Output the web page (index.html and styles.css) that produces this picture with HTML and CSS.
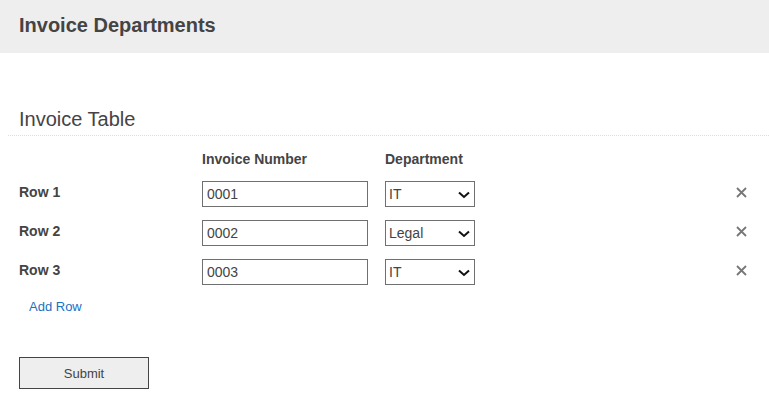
FILE: index.html
```html
<!DOCTYPE html>
<html lang="en">

<head>
    <meta charset="UTF-8">
    <meta name="viewport" content="width=device-width, initial-scale=1.0">
    <title>Invoice Departments</title>
    <link rel="stylesheet" href="styles.css">
</head>

<body>
    <div class="page-header">
        <h1>Invoice Departments</h1>
    </div>

    <div class="section">
        <h2 class="section-title">Invoice Table</h2>

        <div class="invoice-table">
            <div class="cell"></div>
            <div class="cell col-head">Invoice Number</div>
            <div class="cell col-head">Department</div>
            <div class="cell"></div>

            <div class="cell row-label">Row 1</div>
            <div class="cell"><input type="text" class="text-input" value="0001"></div>
            <div class="cell">
                <span class="select-wrap">
                    <select class="dept-select"><option selected>IT</option><option>Legal</option></select>
                    <svg class="chevron" width="12" height="8" viewBox="0 0 12 8"><path d="M1 1.5 L6 6 L11 1.5" fill="none" stroke="#111" stroke-width="2"/></svg>
                </span>
            </div>
            <div class="cell remove"><svg width="11" height="11" viewBox="0 0 11 11"><path d="M1 1 L10 10 M10 1 L1 10" stroke="#777" stroke-width="1.8"/></svg></div>

            <div class="cell row-label">Row 2</div>
            <div class="cell"><input type="text" class="text-input" value="0002"></div>
            <div class="cell">
                <span class="select-wrap">
                    <select class="dept-select"><option>IT</option><option selected>Legal</option></select>
                    <svg class="chevron" width="12" height="8" viewBox="0 0 12 8"><path d="M1 1.5 L6 6 L11 1.5" fill="none" stroke="#111" stroke-width="2"/></svg>
                </span>
            </div>
            <div class="cell remove"><svg width="11" height="11" viewBox="0 0 11 11"><path d="M1 1 L10 10 M10 1 L1 10" stroke="#777" stroke-width="1.8"/></svg></div>

            <div class="cell row-label">Row 3</div>
            <div class="cell"><input type="text" class="text-input" value="0003"></div>
            <div class="cell">
                <span class="select-wrap">
                    <select class="dept-select"><option selected>IT</option><option>Legal</option></select>
                    <svg class="chevron" width="12" height="8" viewBox="0 0 12 8"><path d="M1 1.5 L6 6 L11 1.5" fill="none" stroke="#111" stroke-width="2"/></svg>
                </span>
            </div>
            <div class="cell remove"><svg width="11" height="11" viewBox="0 0 11 11"><path d="M1 1 L10 10 M10 1 L1 10" stroke="#777" stroke-width="1.8"/></svg></div>
        </div>

        <a href="#" class="add-row">Add Row</a>

        <button type="button" class="submit-btn">Submit</button>
    </div>
</body>

</html>
```

FILE: styles.css
```css
body {
    font-family: "Liberation Sans", Arial, sans-serif;
    margin: 0;
    padding: 0;
    color: #444444;
    background-color: #ffffff;
}

.page-header {
    background-color: #eeeeee;
    height: 53px;
    padding-left: 19px;
    display: flex;
    align-items: center;
}

.page-header h1 {
    margin: 0;
    margin-top: -2px;
    font-size: 20px;
    font-weight: bold;
    color: #444444;
}

.section {
    padding-top: 54px;
}

.section-title {
    margin: 0 0 0 8px;
    padding: 0 0 3px 11px;
    font-size: 20px;
    font-weight: normal;
    color: #444444;
    line-height: 25px;
    border-bottom: 1px dotted #dddddd;
}

.invoice-table {
    display: grid;
    grid-template-columns: 183px 183px 1fr 40px;
    grid-template-rows: 33px 39px 39px 39px;
    padding-left: 19px;
    margin-top: 5px;
}

.cell {
    display: flex;
    align-items: center;
    font-size: 14px;
}

.col-head {
    font-weight: bold;
    align-items: flex-end;
    padding-bottom: 7px;
}

.row-label {
    font-weight: bold;
    padding-bottom: 3px;
}

.text-input {
    box-sizing: border-box;
    width: 166px;
    height: 26px;
    margin: 0;
    padding: 0 4px;
    border: 1px solid #707070;
    font-family: "Liberation Sans", Arial, sans-serif;
    font-size: 14px;
    color: #444444;
    background: #ffffff;
}

.select-wrap {
    position: relative;
    display: inline-block;
}

.dept-select {
    -webkit-appearance: none;
    appearance: none;
    box-sizing: border-box;
    width: 90px;
    height: 26px;
    padding: 0 3px;
    border: 1px solid #707070;
    border-radius: 0;
    background: #ffffff;
    font-family: "Liberation Sans", Arial, sans-serif;
    font-size: 14px;
    color: #444444;
    display: block;
}

.chevron {
    position: absolute;
    right: 5px;
    top: 10px;
    pointer-events: none;
}

.remove {
    padding-left: 7px;
    padding-bottom: 3px;
    cursor: pointer;
}

.add-row {
    display: inline-block;
    margin: 8px 0 0 29px;
    font-size: 13px;
    color: #1a6fc6;
    text-decoration: none;
}

.submit-btn {
    display: block;
    margin: 42px 0 0 19px;
    width: 130px;
    height: 32px;
    border: 1px solid #444444;
    background-color: #eeeeee;
    font-family: "Liberation Sans", Arial, sans-serif;
    font-size: 13px;
    color: #444444;
    cursor: pointer;
}
```
